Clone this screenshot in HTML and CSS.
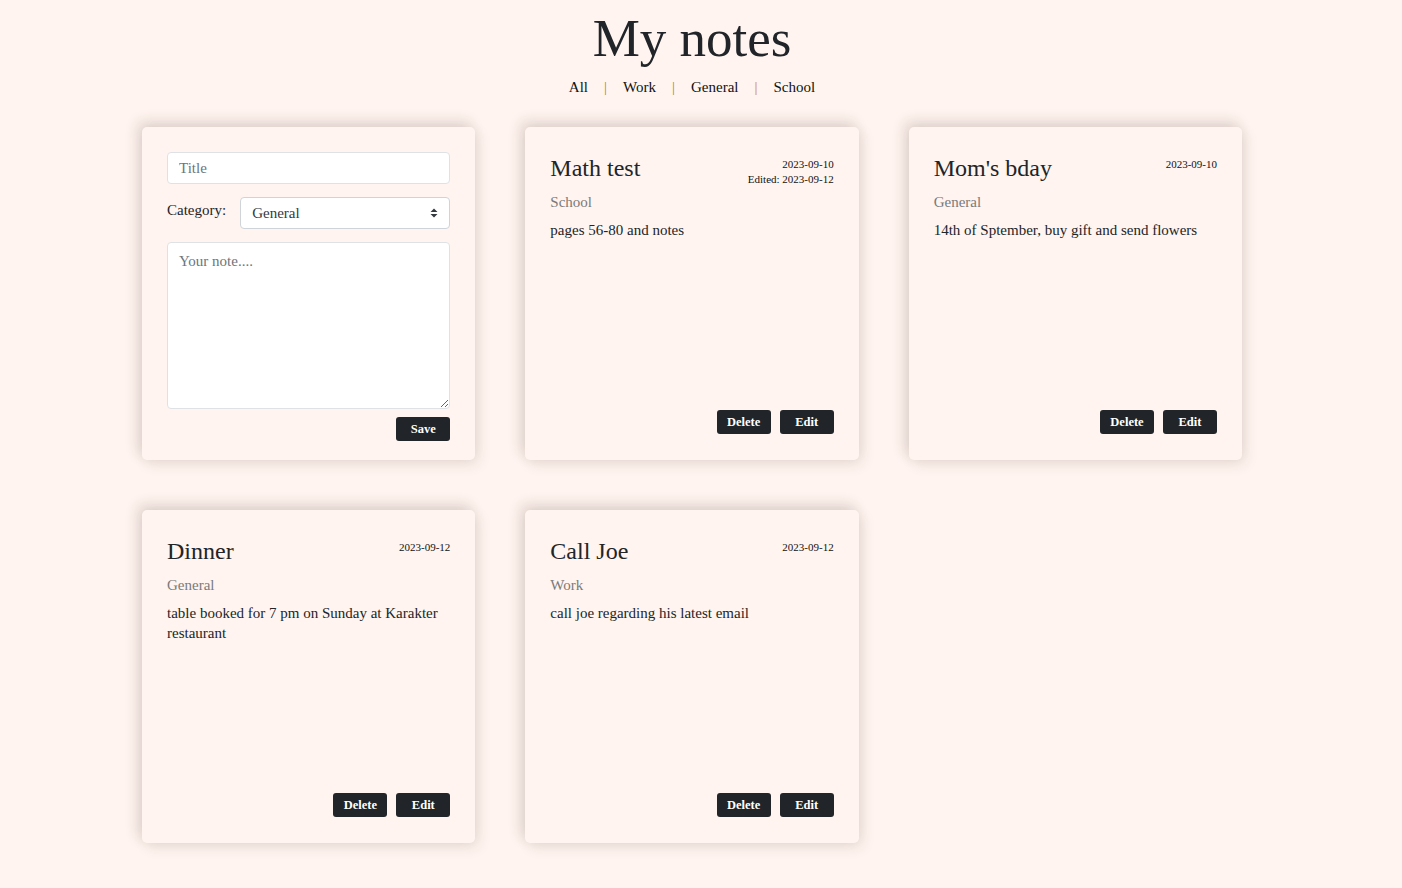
FILE: index.html
```html
<!DOCTYPE html>
<html lang="en">
<head>
<meta charset="utf-8">
<title>My notes</title>
<link rel="stylesheet" href="styles.css">
</head>
<body>
<div class="page">
  <h1 class="page-title">My notes</h1>
  <nav class="filters">
    <a class="filter" href="#">All</a><span class="sep">|</span>
    <a class="filter" href="#">Work</a><span class="sep">|</span>
    <a class="filter" href="#">General</a><span class="sep">|</span>
    <a class="filter" href="#">School</a>
  </nav>

  <main class="grid">
    <form class="card form-card">
      <input class="field" type="text" placeholder="Title">
      <div class="cat-row">
        <label class="cat-label">Category:</label>
        <div class="select-wrap">
          <select class="field select">
            <option>General</option>
            <option>Work</option>
            <option>School</option>
          </select>
          <svg class="select-icon" width="8" height="10" viewBox="0 0 8 10"><path d="M4 0.5 L7.5 4 L0.5 4 Z M4 9.5 L7.5 6 L0.5 6 Z" fill="#343a40"/></svg>
        </div>
      </div>
      <textarea class="field note-area" placeholder="Your note...."></textarea>
      <div class="actions">
        <button class="btn" type="button">Save</button>
      </div>
    </form>

    <article class="card note">
      <header class="note-head">
        <h3 class="note-title">Math test</h3>
        <div class="dates"><div>2023-09-10</div><div>Edited: 2023-09-12</div></div>
      </header>
      <div class="note-cat">School</div>
      <p class="note-text">pages 56-80 and notes</p>
      <div class="actions"><button class="btn">Delete</button><button class="btn">Edit</button></div>
    </article>

    <article class="card note">
      <header class="note-head">
        <h3 class="note-title">Mom's bday</h3>
        <div class="dates"><div>2023-09-10</div></div>
      </header>
      <div class="note-cat">General</div>
      <p class="note-text">14th of Sptember, buy gift and send flowers</p>
      <div class="actions"><button class="btn">Delete</button><button class="btn">Edit</button></div>
    </article>

    <article class="card note">
      <header class="note-head">
        <h3 class="note-title">Dinner</h3>
        <div class="dates"><div>2023-09-12</div></div>
      </header>
      <div class="note-cat">General</div>
      <p class="note-text">table booked for 7 pm on Sunday at Karakter restaurant</p>
      <div class="actions"><button class="btn">Delete</button><button class="btn">Edit</button></div>
    </article>

    <article class="card note">
      <header class="note-head">
        <h3 class="note-title">Call Joe</h3>
        <div class="dates"><div>2023-09-12</div></div>
      </header>
      <div class="note-cat">Work</div>
      <p class="note-text">call joe regarding his latest email</p>
      <div class="actions"><button class="btn">Delete</button><button class="btn">Edit</button></div>
    </article>
  </main>
</div>
</body>
</html>
```

FILE: styles.css
```css
* { box-sizing: border-box; }

html, body {
  margin: 0;
  padding: 0;
  background: #fff4ef;
}

body {
  font-family: "Liberation Serif", "Times New Roman", serif;
  color: #212529;
  font-size: 15px;
  line-height: 20px;
}

.page {
  width: 1384px;
  padding-top: 6px;
  padding-bottom: 40px;
}

.page-title {
  margin: 0;
  text-align: center;
  font-weight: 400;
  font-size: 53px;
  line-height: 64px;
  color: #212529;
}

.filters {
  margin-top: 7px;
  display: flex;
  justify-content: center;
  gap: 16px;
  font-size: 15px;
  line-height: 20px;
}

.filter {
  color: #111;
  text-decoration: none;
}

.sep {
  color: #d0782a;
}

.grid {
  margin-top: 30px;
  display: grid;
  grid-template-columns: repeat(3, 333.33px);
  column-gap: 50px;
  row-gap: 50px;
  justify-content: center;
}

.card {
  height: 333px;
  background: #fff4ef;
  border-radius: 5px;
  box-shadow: -4px -5px 14px rgba(60, 40, 30, 0.16), 4px 5px 14px rgba(60, 40, 30, 0.09);
  padding: 25px 25px 26px;
  display: flex;
  flex-direction: column;
  margin: 0;
}

.form-card > * {
  flex-shrink: 0;
}

.field {
  width: 100%;
  height: 32px;
  background: #fff;
  border: 1px solid #dee2e6;
  border-radius: 4px;
  padding: 0 11px;
  font-family: "Liberation Serif", "Times New Roman", serif;
  font-size: 15px;
  color: #495057;
  outline: none;
}

.field::placeholder {
  color: #6c757d;
}

.cat-row {
  margin-top: 13px;
  display: flex;
  align-items: flex-start;
  gap: 14px;
}

.cat-label {
  padding-top: 3px;
  font-size: 15px;
  line-height: 20px;
  color: #212529;
  white-space: nowrap;
}

.select-wrap {
  position: relative;
  flex: 1;
}

.select {
  appearance: none;
  -webkit-appearance: none;
  border-color: #ced4da;
  color: #343a40;
}

.select-icon {
  position: absolute;
  right: 12px;
  top: 11px;
  pointer-events: none;
}

.note-area {
  margin-top: 13px;
  height: 167px;
  padding: 8px 11px;
  resize: vertical;
  line-height: 20px;
}

.actions {
  display: flex;
  justify-content: flex-end;
  gap: 9px;
}

.form-card .actions {
  margin-top: 8px;
}

.btn {
  width: 54px;
  height: 24px;
  padding: 0;
  border: none;
  border-radius: 3px;
  background: #212529;
  color: #fff;
  font-family: "Liberation Serif", "Times New Roman", serif;
  font-weight: 700;
  font-size: 12.5px;
  line-height: 24px;
  cursor: pointer;
}

.note-head {
  display: flex;
  justify-content: space-between;
  align-items: flex-start;
}

.note-title {
  margin: 2px 0 9px;
  font-weight: 400;
  font-size: 24px;
  line-height: 29px;
  color: #212529;
}

.dates {
  margin-top: 5px;
  text-align: right;
  font-size: 11px;
  line-height: 15px;
  color: #111;
}

.note-cat {
  color: #7a7a7a;
  font-size: 15px;
  line-height: 20px;
}

.note-text {
  margin: 8px 0 0;
  flex: 1;
  font-size: 15px;
  line-height: 20px;
  color: #212529;
}
```
